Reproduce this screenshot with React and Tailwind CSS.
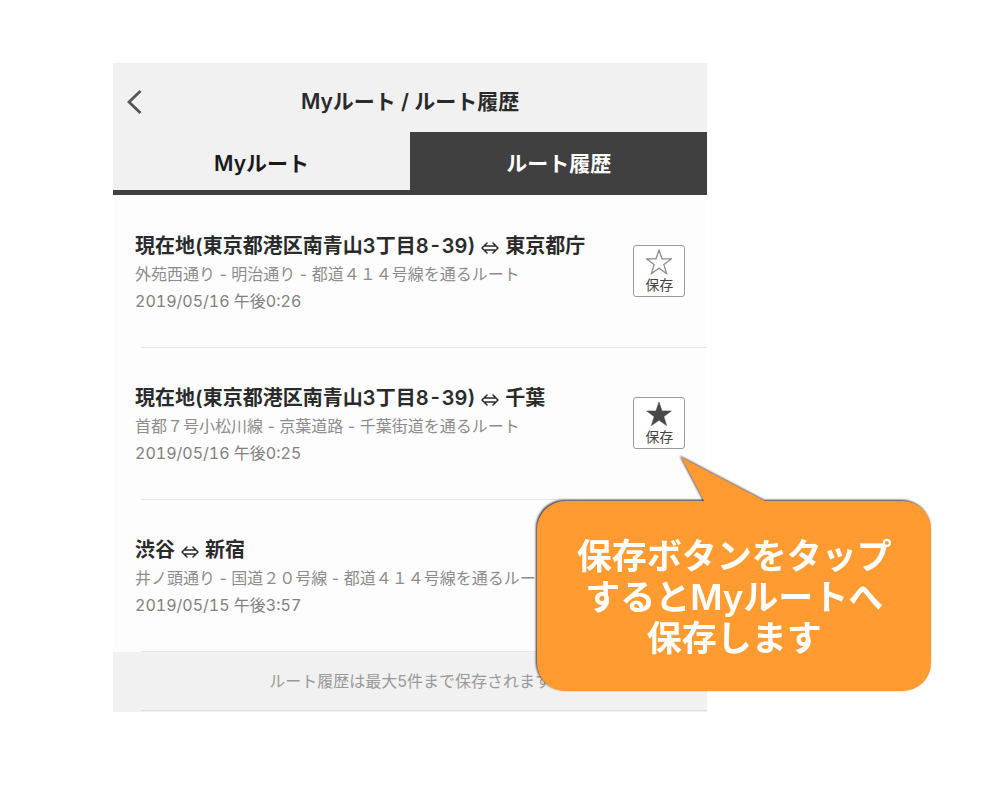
import React from "react";

const STAR = "M12 1 L14.8 9.2 L23.4 9.2 L16.5 14.4 L19 22.7 L12 17.8 L5 22.7 L7.5 14.4 L0.6 9.2 L9.2 9.2 Z";

const routes = [
  {
    from: "現在地(東京都港区南青山3丁目8-39)",
    to: "東京都庁",
    via: "外苑西通り - 明治通り - 都道４１４号線を通るルート",
    date: "2019/05/16 午後0:26",
    saved: false,
  },
  {
    from: "現在地(東京都港区南青山3丁目8-39)",
    to: "千葉",
    via: "首都７号小松川線 - 京葉道路 - 千葉街道を通るルート",
    date: "2019/05/16 午後0:25",
    saved: true,
    hint: true,
  },
  {
    from: "渋谷",
    to: "新宿",
    via: "井ノ頭通り - 国道２０号線 - 都道４１４号線を通るルート",
    date: "2019/05/15 午後3:57",
    saved: false,
  },
];

function BothWays() {
  return (
    <svg viewBox="0 0 18 12" className="mx-1.5 inline-block h-3 w-[18px] align-[-1px]" fill="none" stroke="#2a2a2a" strokeWidth="1.5" strokeLinejoin="round" strokeLinecap="round" role="img" aria-label="往復">
      <path d="M6 1 L1 6 L6 11 M12 1 L17 6 L12 11 M4 4 H14 M4 8 H14" />
    </svg>
  );
}

function SaveButton({ saved }) {
  return (
    <button type="button" aria-pressed={saved} className="flex h-[52px] w-[52px] flex-col items-center justify-between rounded-[3px] border border-[#999] bg-white pt-[3px] pb-0.5 text-[#444]">
      <svg viewBox="0 0 24 24" className="h-[26px] w-[26px]" fill={saved ? "#484848" : "none"} stroke={saved ? "#484848" : "#8c8c8c"} strokeWidth={saved ? "0.5" : "1.2"} aria-hidden="true">
        <path d={STAR} />
      </svg>
      <span className="text-sm leading-[18px]">保存</span>
    </button>
  );
}

function Hint() {
  return (
    <div role="tooltip" className="absolute top-[60px] left-[-96px] z-10 w-[394px] pt-[44px] drop-shadow-[-1px_-1px_1px_rgba(20,20,50,0.9)]">
      <svg viewBox="0 0 84 46" className="absolute top-0 left-[144px] h-[46px] w-[84px]" aria-hidden="true">
        <path d="M0 0 L84 44 V46 H23 V44 Z" fill="#ff9b30" />
      </svg>
      <p className="rounded-[28px] bg-[#ff9b30] px-6 pt-[35px] pb-8 text-center text-[35px] leading-[41px] font-semibold text-white">
        保存ボタンをタップ
        <br />
        するとMyルートへ
        <br />
        保存します
      </p>
    </div>
  );
}

function RouteRow({ route }) {
  return (
    <li>
      <div className="flex items-start justify-between pt-[35px] pr-[22px] pb-[33px] pl-[22px]">
        <div className="min-w-0">
          <h2 className="text-xl leading-[30px] font-semibold text-[#2a2a2a] tabular-nums">
            {route.from}
            <BothWays />
            {route.to}
          </h2>
          <p className="text-base leading-[27px] text-[#8c8c8c]">{route.via}</p>
          <p className="text-base leading-[26px] text-[#808080] tabular-nums">{route.date}</p>
        </div>
        <div className="relative mt-[14px] shrink-0">
          <SaveButton saved={route.saved} />
          {route.hint && <Hint />}
        </div>
      </div>
      <div className="ml-7 h-px bg-[#e6e6e6]" />
    </li>
  );
}

export default function App() {
  return (
    <div className="min-h-screen bg-white pt-[63px] pl-[113px] font-['Inter','Noto_Sans_CJK_JP',sans-serif]">
      <main className="w-[67%] min-w-[593px]">
        <header className="relative flex h-[69px] items-center justify-center bg-[#f1f1f1] pt-2">
          <button type="button" aria-label="戻る" className="absolute left-3 p-px">
            <svg viewBox="0 0 18 26" className="h-[26px] w-[18px]" fill="none" stroke="#555" strokeWidth="2.8" aria-hidden="true">
              <path d="M14.5 2 L3 13 L14.5 24" />
            </svg>
          </button>
          <h1 className="text-[21px] leading-8 font-semibold text-[#2a2a2a]">Myルート / ルート履歴</h1>
        </header>
        <nav className="grid h-[63px] grid-cols-2 border-b-[5px] border-[#404040] bg-[#f1f1f1] text-[21px] leading-8">
          <button type="button" className="pt-1.5 font-semibold text-[#1a1a1a]">Myルート</button>
          <button type="button" aria-current="page" className="bg-[#404040] pt-1.5 font-bold text-white">ルート履歴</button>
        </nav>
        <ul className="bg-[#fdfdfd] pt-px">
          {routes.map((route) => (
            <RouteRow key={route.date} route={route} />
          ))}
        </ul>
        <footer className="bg-[#f1f1f1] pb-px">
          <p className="py-4 text-center text-base leading-[26px] text-[#999]">ルート履歴は最大5件まで保存されます</p>
          <div className="ml-7 h-px bg-[#dedede]" />
        </footer>
      </main>
    </div>
  );
}
